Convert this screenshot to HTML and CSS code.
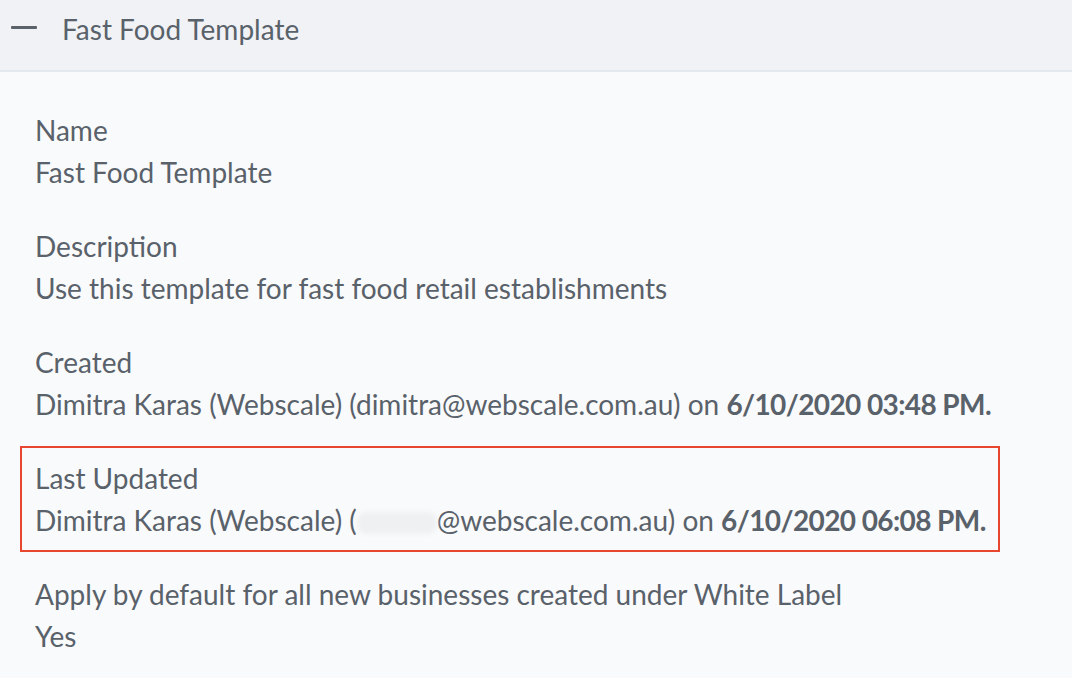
FILE: index.html
```html
<!DOCTYPE html>
<html>
<head>
<meta charset="utf-8">
<link rel="stylesheet" href="styles.css">
</head>
<body>
<div class="panel">
  <div class="header">
    <span class="minus"></span>
    <span class="title">Fast Food Template</span>
  </div>
  <div class="content">
    <div class="field">
      <div class="label">Name</div>
      <div class="value">Fast Food Template</div>
    </div>
    <div class="field">
      <div class="label">Description</div>
      <div class="value">Use this template for fast food retail establishments</div>
    </div>
    <div class="field">
      <div class="label">Created</div>
      <div class="value">Dimitra Karas (Webscale) (dimitra@webscale.com.au) on <b>6/10/2020 03:48 PM.</b></div>
    </div>
    <div class="field highlight">
      <div class="label">Last Updated</div>
      <div class="value">Dimitra Karas (Webscale) (<span class="redact"></span>@webscale.com.au) on <b>6/10/2020 06:08 PM.</b></div>
    </div>
    <div class="field">
      <div class="label">Apply by default for all new businesses created under White Label</div>
      <div class="value">Yes</div>
    </div>
  </div>
</div>
</body>
</html>
```

FILE: styles.css
```css
html, body {
  margin: 0;
  padding: 0;
  background: #f9fafb;
}
body {
  font-family: Lato, "Liberation Sans", sans-serif;
  color: #59616a;
  width: 1072px;
  height: 678px;
  overflow: hidden;
}
.header {
  height: 70px;
  background: #f1f2f5;
  border-bottom: 2px solid #e3e8ee;
  display: flex;
  align-items: flex-start;
  padding-left: 11px;
}
.minus {
  width: 26px;
  height: 3px;
  background: #5b626a;
  border-radius: 1px;
  margin-top: 26px;
  margin-right: 25px;
}
.title {
  font-size: 28px;
  line-height: 42px;
  margin-top: 8px;
}
.content {
  padding: 37px 35px 0;
  display: flex;
  flex-direction: column;
  gap: 32px;
}
.field {
  font-size: 28px;
  line-height: 42px;
  white-space: nowrap;
}
.value b {
  font-weight: 700;
  letter-spacing: -0.6px;
}
.highlight {
  border: 2px solid #e8472f;
  padding: 9px 12px 9px 13px;
  margin: -11px 0 -11px -15px;
  width: fit-content;
}
.redact {
  display: inline-block;
  width: 80px;
  height: 22px;
  vertical-align: -3px;
  background: #eef0f2;
  border-radius: 10px;
  filter: blur(2px);
}
```
